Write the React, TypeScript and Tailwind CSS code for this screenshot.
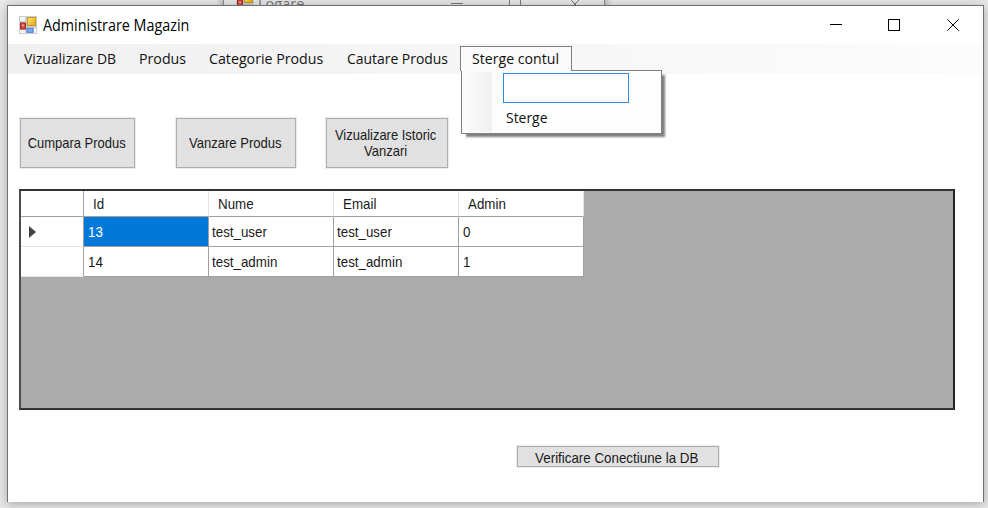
import type { ReactNode } from "react";

function FormIcon({ className = "" }: { className?: string }) {
  return (
    <svg className={"shrink-0 " + className} width="18" height="18" viewBox="0 0 18 18">
      <defs>
        <linearGradient id="gold" x1="0" y1="0" x2="1" y2="1">
          <stop offset="0" stopColor="#ffe680" />
          <stop offset="1" stopColor="#e3a600" />
        </linearGradient>
      </defs>
      <rect x="0" y="0" width="18" height="18" fill="#cdcdcd" />
      <path d="M1 1h5v4H1zM1 14h5v3H1zM15 12h2v5h-2z" fill="#f6f6f6" />
      <rect x="8.5" y="1.5" width="8" height="8" fill="url(#gold)" stroke="#c39a20" />
      <rect x="1.5" y="7" width="5" height="6" fill="#cf4a42" stroke="#a92a26" />
      <rect x="3" y="8.3" width="1.8" height="2" fill="#f1a09a" />
      <rect x="8" y="12.3" width="6" height="4" fill="#78a8ef" stroke="#4f80d4" />
    </svg>
  );
}

function GridText({ children }: { children: ReactNode }) {
  return (
    <span className="mt-px inline-block origin-left scale-x-[0.89] whitespace-nowrap">{children}</span>
  );
}

function PushButton({ children, className = "" }: { children: ReactNode; className?: string }) {
  return (
    <button
      className={
        "flex items-center justify-center border border-[#adadad] bg-[#e1e1e1] p-0 text-center text-[15px] leading-4 text-[#1a1a1a] outline outline-1 outline-[#ececec] " +
        className
      }
    >
      {children}
    </button>
  );
}

const users = [
  { id: "13", name: "test_user", email: "test_user", admin: "0", current: true },
  { id: "14", name: "test_admin", email: "test_admin", admin: "1", current: false },
];

export default function App() {
  return (
    <div className="relative h-[508px] w-[988px] overflow-hidden bg-[#e9e9e9] font-['Liberation_Sans',sans-serif]">
      <div className="absolute left-[223px] top-[-12px] flex h-6 w-[382px] border-x border-[#8a8a8a] bg-[#e6e6e6] shadow-[0_0_8px_rgba(0,0,0,0.35)]">
        <FormIcon className="ml-3 mt-[5px]" />
        <span className="ml-[4px] mt-[5px] w-[50px] origin-left scale-x-[0.97] font-['Open_Sans',sans-serif] text-[15px] leading-5 text-[#777]">
          Logare
        </span>
        <div className="ml-[143px] mt-[15px] h-px w-3 bg-[#777]" />
        <div className="ml-[46px] h-full w-3 border-x border-[#777]" />
        <svg className="ml-12 mt-[10px]" width="12" height="12" viewBox="0 0 12 12">
          <path d="M1 1l10 10M11 1L1 11" stroke="#777" />
        </svg>
      </div>

      <div className="absolute left-[7px] top-[5px] flex h-[497px] w-[977px] flex-col border-x border-t border-[#707070] bg-white shadow-[0_2px_10px_rgba(0,0,0,0.3)]">
        <header className="flex h-[38px] shrink-0 items-center pl-[11px]">
          <FormIcon />
          <span className="ml-[6px] origin-left scale-x-[0.925] whitespace-nowrap font-['Open_Sans',sans-serif] text-[15.5px] leading-5 text-black">
            Administrare Magazin
          </span>
          <div className="ml-auto flex items-center pr-[23px]">
            <svg width="130" height="12" viewBox="0 0 130 12" fill="none" stroke="#000" className="overflow-visible">
              <path d="M0 5.5h12" />
              <rect x="58.5" y="0.5" width="11" height="11" />
              <path d="M117.3 0.3l11.4 11.4M128.7 0.3l-11.4 11.4" />
            </svg>
          </div>
        </header>

        <nav className="relative flex h-[30px] shrink-0 items-center bg-linear-to-r from-[#f0f0f0] to-[#fcfcfc] font-['Open_Sans',sans-serif] text-[14.5px] leading-5 text-[#111]">
          <div className="ml-4 w-[115px] whitespace-nowrap">
            <span className="inline-block origin-left scale-x-[0.96]">Vizualizare DB</span>
          </div>
          <div className="w-[70px] whitespace-nowrap">
            <span className="inline-block origin-left scale-x-[0.98]">Produs</span>
          </div>
          <div className="w-[138px] whitespace-nowrap">
            <span className="inline-block origin-left scale-x-[0.98]">Categorie Produs</span>
          </div>
          <div className="w-[114px] whitespace-nowrap">
            <span className="inline-block origin-left scale-x-[0.96]">Cautare Produs</span>
          </div>
          <div className="z-20 -ml-px mt-[-1px] h-[25px] w-[112px] border-x border-t border-[#808080] bg-[#fafafa] pl-[11px] pt-[2px] whitespace-nowrap">
            <span className="inline-block origin-left scale-x-[0.975]">Sterge contul</span>
          </div>
          <div className="absolute left-[453px] top-[26px] z-10 flex h-[64px] w-[201px] border border-[#808080] bg-[#fdfdfd] shadow-[4px_4px_2px_-1px_rgba(0,0,0,0.5)]">
            <div className="my-px ml-px w-[29px] bg-linear-to-r from-[#fcfcfc] to-[#f0f0f0]" />
            <div className="ml-[11px] mt-[2px]">
              <input className="block h-[30px] w-[126px] border border-[#2a8ddd] bg-white outline-none" />
              <span className="mt-[5px] ml-[3px] inline-block origin-left scale-x-[0.96]">Sterge</span>
            </div>
          </div>
        </nav>

        <div className="ml-[12px] mt-[44px] flex h-[50px] shrink-0">
          <PushButton className="w-[115px]">
            <span className="mr-[2px] scale-x-[0.865] whitespace-nowrap">Cumpara Produs</span>
          </PushButton>
          <PushButton className="ml-[41px] w-[120px]">
            <span className="mr-[2px] scale-x-[0.87] whitespace-nowrap">Vanzare Produs</span>
          </PushButton>
          <PushButton className="ml-[30px] w-[122px]">
            <span className="mr-[2px] scale-x-[0.865] whitespace-nowrap">
              Vizualizare Istoric
              <br />
              Vanzari
            </span>
          </PushButton>
        </div>

        <div className="ml-[11px] mt-[21px] h-[221px] w-[936px] shrink-0 border-2 border-t-[#333] border-r-[#222] border-b-[#333] border-l-[#4c4c4c] bg-[#ababab]">
          <div className="grid w-[563px] grid-cols-[63px_125px_125px_125px_125px] text-[15px] text-[#1a1a1a]">
            <div className="h-[26px] border-r border-b border-[#a0a0a0] bg-white" />
            {["Id", "Nume", "Email", "Admin"].map((label) => (
              <div key={label} className="flex h-[26px] items-center border-r border-b border-r-[#e5e5e5] border-b-[#a0a0a0] bg-white pl-[9px]">
                <GridText>{label}</GridText>
              </div>
            ))}
            {users.map((user) => [
              <div key={user.id} className="flex h-[30px] items-center border-r border-b border-r-[#a0a0a0] border-b-[#e5e5e5] bg-white pl-2">
                {user.current && (
                  <svg width="7" height="12" viewBox="0 0 7 12">
                    <path d="M0 0l7 6-7 6z" fill="#444" />
                  </svg>
                )}
              </div>,
              ...[user.id, user.name, user.email, user.admin].map((value, i) => (
                <div
                  key={user.id + "-" + i}
                  className={
                    "flex h-[30px] items-center border-r border-b border-[#a0a0a0] " +
                    (i === 0 || i === 3 ? "pl-[4px] " : "pl-[3px] ") +
                    (user.current && i === 0 ? "bg-[#0078d7] text-white" : "bg-white")
                  }
                >
                  <GridText>{value}</GridText>
                </div>
              )),
            ])}
          </div>
        </div>

        <PushButton className="ml-[509px] mt-[36px] h-[21px] w-[202px] shrink-0 pt-[2px]">
          <span className="mr-[2px] scale-x-[0.89] whitespace-nowrap">Verificare Conectiune la DB</span>
        </PushButton>
      </div>
    </div>
  );
}
